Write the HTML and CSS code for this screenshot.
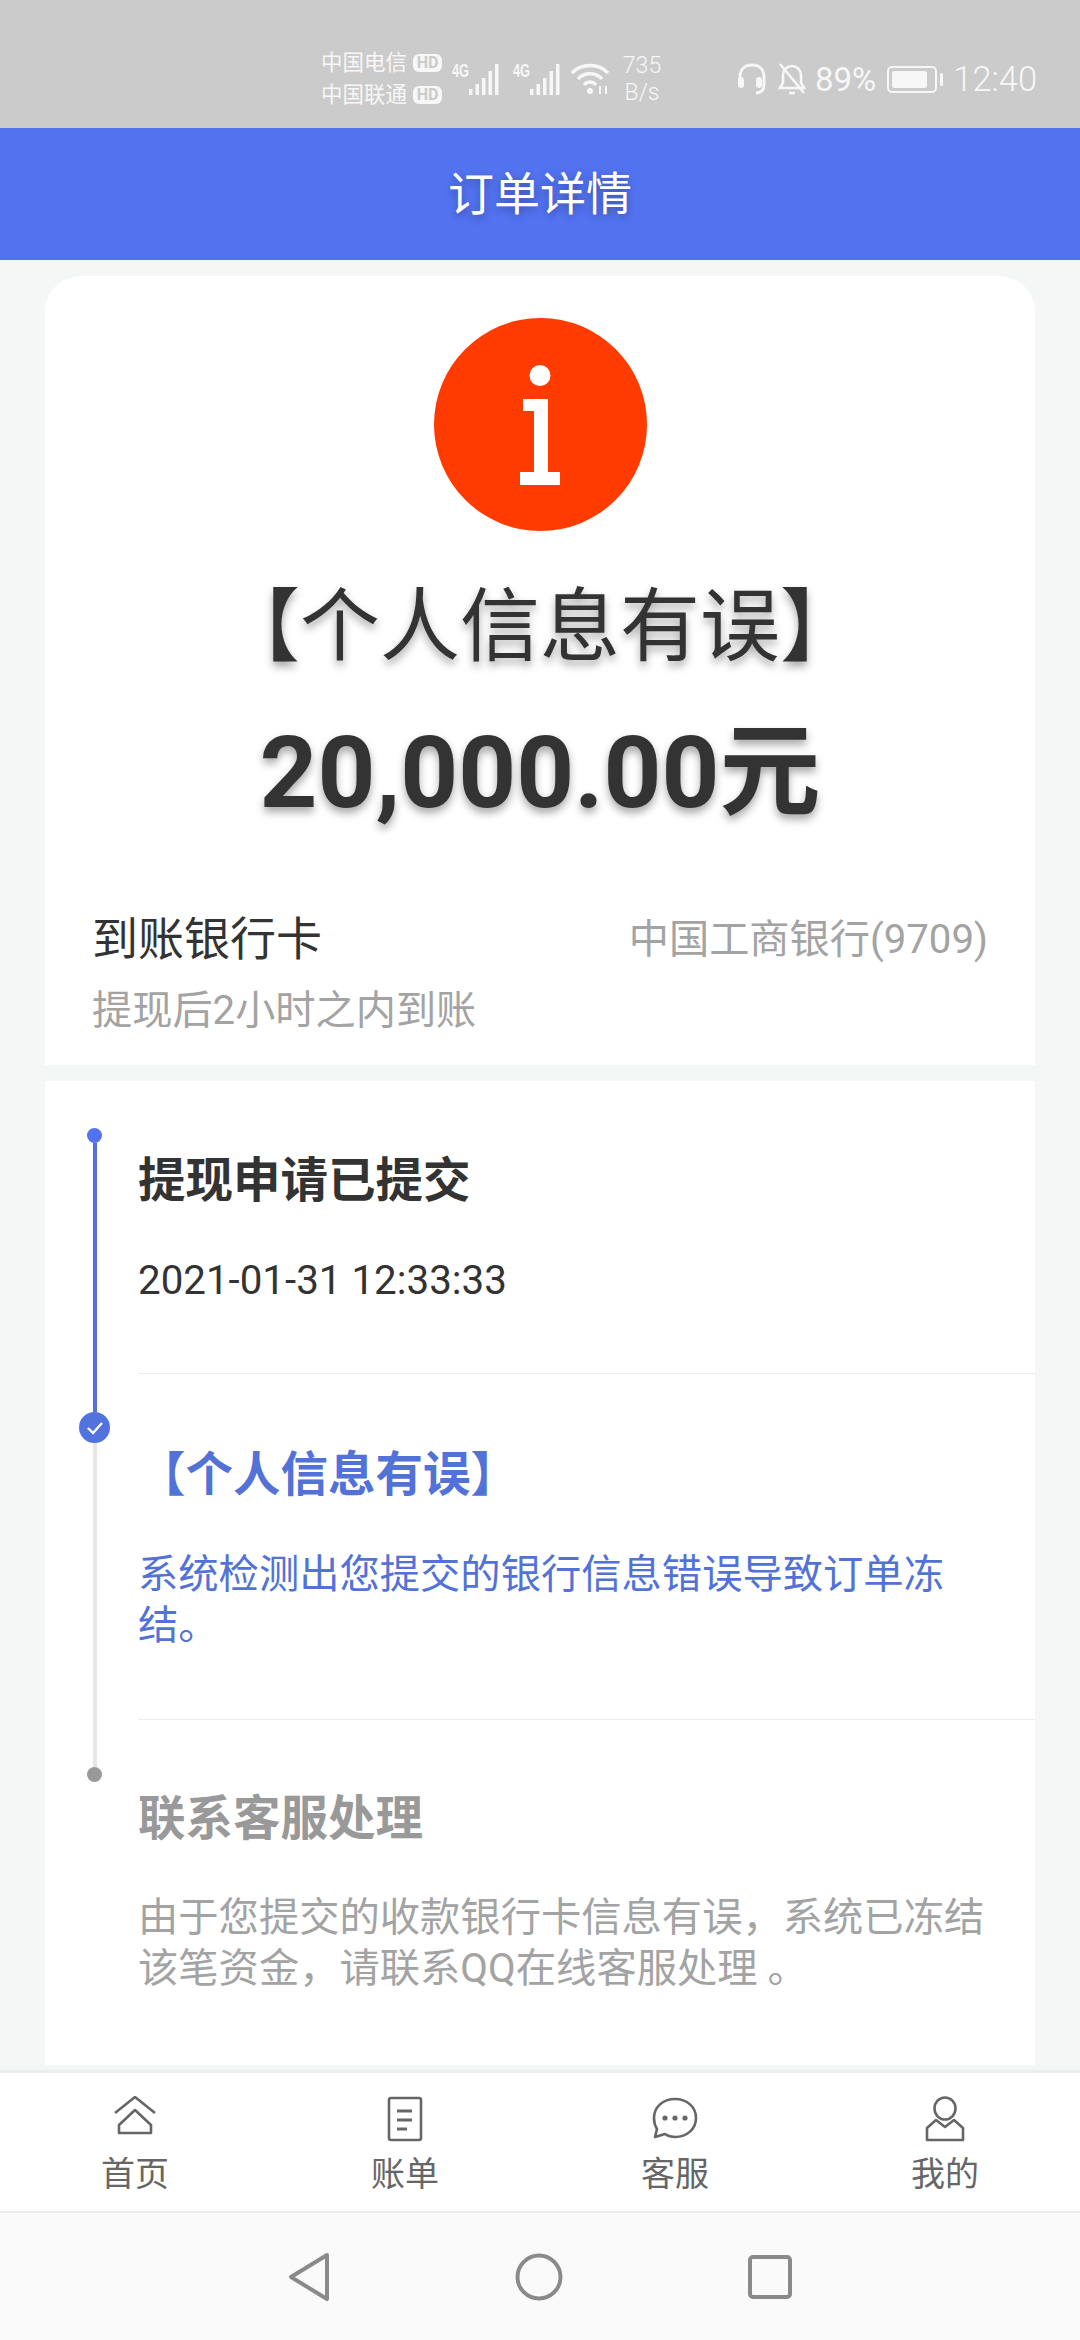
FILE: index.html
```html
<!DOCTYPE html>
<html lang="zh-CN">
<head>
    <meta charset="UTF-8">
    <meta name="viewport" content="width=device-width, initial-scale=1.0">
    <title>订单详情</title>
    <link rel="stylesheet" href="styles.css">
</head>
<body>
    <div class="status-bar">
        <div class="carriers">
            <div class="carrier">中国电信<span class="hd">HD</span></div>
            <div class="carrier">中国联通<span class="hd">HD</span></div>
        </div>
        <svg class="signal" width="50" height="36" viewBox="0 -4 50 36" fill="#f7f7f7">
            <text x="0" y="14" class="net" textLength="17" lengthAdjust="spacingAndGlyphs">4G</text>
            <rect x="17" y="26" width="3.500" height="6"/><rect x="23.500" y="21" width="3.500" height="11"/><rect x="30" y="15" width="3.500" height="17"/><rect x="36.500" y="8" width="3.500" height="24"/><rect x="43" y="1" width="3.500" height="31"/>
        </svg>
        <svg class="signal second" width="50" height="36" viewBox="0 -4 50 36" fill="#f7f7f7">
            <text x="0" y="14" class="net" textLength="17" lengthAdjust="spacingAndGlyphs">4G</text>
            <rect x="17" y="26" width="3.500" height="6"/><rect x="23.500" y="21" width="3.500" height="11"/><rect x="30" y="15" width="3.500" height="17"/><rect x="36.500" y="8" width="3.500" height="24"/><rect x="43" y="1" width="3.500" height="31"/>
        </svg>
        <svg class="wifi" width="40" height="32" viewBox="0 0 40 32" fill="none" stroke="#f7f7f7" stroke-width="3.400">
            <path d="M1 10C10 0 28 0 37 10"/>
            <path d="M7 16C13 9 25 9 31 16"/>
            <path d="M13 22C16 18 22 18 25 22"/>
            <circle cx="19" cy="28" r="3" fill="#f7f7f7" stroke="none"/>
            <path d="M29 23v8M35 23v8" stroke-width="2"/>
        </svg>
        <div class="speed"><span>735</span><span>B/s</span></div>
        <svg class="headset" width="30" height="32" viewBox="0 0 30 32" fill="none" stroke="#f7f7f7" stroke-width="3">
            <path d="M3 22V14C3 6 8 2 15 2s12 4 12 12v8c0 5-3 8-8 8"/>
            <rect x="1" y="14" width="6" height="11" rx="3" fill="#f7f7f7" stroke="none"/>
            <rect x="19" y="14" width="6" height="11" rx="3" fill="#f7f7f7" stroke="none"/>
        </svg>
        <svg class="bell" width="30" height="32" viewBox="0 0 30 32" fill="none" stroke="#f7f7f7" stroke-width="2.600">
            <path d="M3 25h24l-3-5v-8c0-5-4-9-9-9s-9 4-9 9v8z"/>
            <path d="M3 1l24 29"/>
            <path d="M12 30h6"/>
        </svg>
        <span class="pct">89%</span>
        <div class="battery"><div class="battery-fill"></div></div>
        <div class="battery-tip"></div>
        <span class="clock">12:40</span>
    </div>

    <div class="title-bar">订单详情</div>

    <main class="content">
        <section class="card summary">
            <div class="alert-icon">
                <svg width="40" height="120" viewBox="0 0 40 120" fill="#fff">
                    <ellipse cx="20" cy="10.500" rx="10.500" ry="10.500"/>
                    <path d="M3 34H28V107H40V120H0V107H14V46H3z"/>
                </svg>
            </div>
            <h1 class="status-name">【个人信息有误】</h1>
            <div class="amount">20,000.00元</div>
            <div class="bank-row">
                <span class="bank-label">到账银行卡</span>
                <span class="bank-name">中国工商银行(9709)</span>
            </div>
            <div class="bank-note">提现后2小时之内到账</div>
        </section>

        <section class="card timeline">
            <div class="step step-one">
                <div class="rail">
                    <div class="dot dot-blue"></div>
                    <div class="line line-blue"></div>
                </div>
                <div class="step-body">
                    <h3 class="step-title">提现申请已提交</h3>
                    <p class="step-date">2021-01-31 12:33:33</p>
                </div>
            </div>
            <div class="step step-two">
                <div class="rail">
                    <div class="dot-check">
                        <svg width="18" height="14" viewBox="0 0 18 14" fill="none" stroke="#fff" stroke-width="2.400"><path d="M2 7l5 5 9-10"/></svg>
                    </div>
                    <div class="line line-grey"></div>
                </div>
                <div class="step-body">
                    <h3 class="step-title blue">【个人信息有误】</h3>
                    <p class="step-text blue">系统检测出您提交的银行信息错误导致订单冻结。</p>
                </div>
            </div>
            <div class="step step-three">
                <div class="rail">
                    <div class="dot dot-grey"></div>
                </div>
                <div class="step-body last">
                    <h3 class="step-title grey">联系客服处理</h3>
                    <p class="step-text grey">由于您提交的收款银行卡信息有误，系统已冻结该笔资金，请联系QQ在线客服处理 。</p>
                </div>
            </div>
        </section>
    </main>

    <nav class="tabs">
        <div class="tab">
            <svg width="42" height="46" viewBox="0 0 42 46" fill="none" stroke="#666" stroke-width="2.600" stroke-linejoin="round">
                <path d="M1 17L21 1l20 16"/>
                <path d="M5 29L21 14l16 15v8H5z"/>
            </svg>
            <span>首页</span>
        </div>
        <div class="tab">
            <svg width="36" height="46" viewBox="0 0 36 46" fill="none" stroke="#666" stroke-width="2.600">
                <rect x="2" y="2" width="32" height="42" rx="2"/>
                <path d="M10 15h15M10 24h15M10 33h10" stroke-width="3"/>
            </svg>
            <span>账单</span>
        </div>
        <div class="tab">
            <svg width="46" height="46" viewBox="0 0 46 46" fill="none" stroke="#666" stroke-width="2.600" stroke-linejoin="round">
                <path d="M23 3C11 3 2 11 2 22c0 5 1 8 3 11l-2 8 10-3c3 2 6 3 10 3 12 0 21-8 21-19S35 3 23 3z"/>
                <g fill="#666" stroke="none"><circle cx="13" cy="22" r="2.600"/><circle cx="23" cy="22" r="2.600"/><circle cx="33" cy="22" r="2.600"/></g>
            </svg>
            <span>客服</span>
        </div>
        <div class="tab">
            <svg width="40" height="46" viewBox="0 0 40 46" fill="none" stroke="#666" stroke-width="2.600" stroke-linejoin="round">
                <ellipse cx="20" cy="12.500" rx="10.500" ry="11"/>
                <path d="M2 44V32l9-8 9 7 9-7 9 8v12z"/>
            </svg>
            <span>我的</span>
        </div>
    </nav>

    <div class="system-nav">
        <svg width="42" height="48" viewBox="0 0 42 48" fill="none" stroke="#8a8a8a" stroke-width="4" stroke-linejoin="round"><path d="M39 2L3 24l36 22z"/></svg>
        <svg width="48" height="48" viewBox="0 0 48 48" fill="none" stroke="#8a8a8a" stroke-width="4"><circle cx="24" cy="24" r="21.500"/></svg>
        <svg width="44" height="44" viewBox="0 0 44 44" fill="none" stroke="#8a8a8a" stroke-width="4"><rect x="2" y="2" width="40" height="40" rx="3"/></svg>
    </div>
</body>
</html>
```

FILE: styles.css
```css
* {
    box-sizing: border-box;
}
html, body {
    margin: 0;
    padding: 0;
}
body {
    width: 1080px;
    height: 2340px;
    display: flex;
    flex-direction: column;
    overflow: hidden;
    background-color: #f5f7f7;
    color: #333;
    font-family: Roboto, "Noto Sans CJK SC", sans-serif;
}
h1, h3, p {
    margin: 0;
    font-weight: normal;
}

/* status bar */
.status-bar {
    height: 128px;
    flex: none;
    display: flex;
    align-items: center;
    padding: 30px 0 0 321px;
    background-color: #cbcbcb;
    color: #f7f7f7;
}
.carriers {
    width: 131px;
    flex: none;
}
.carrier {
    display: flex;
    align-items: center;
    height: 32px;
    font-size: 21.500px;
    line-height: 32px;
}
.hd {
    margin-left: 6px;
    width: 29px;
    text-align: center;
    border-radius: 6px;
    background-color: #f7f7f7;
    color: #cbcbcb;
    font-size: 16px;
    line-height: 18px;
    font-weight: bold;
}
.signal {
    margin-top: -4px;
    margin-right: 11px;
}
.signal.second {
    margin-right: 8px;
}
.net {
    font-size: 18px;
    font-weight: bold;
    font-family: "Liberation Sans", sans-serif;
}
.speed {
    width: 42px;
    margin-left: 10px;
    display: flex;
    flex-direction: column;
    align-items: center;
    font-size: 23px;
    line-height: 27px;
    font-weight: 300;
}
.headset {
    margin-left: 74px;
}
.bell {
    margin-left: 10px;
}
.pct {
    margin-left: 8px;
    font-size: 33px;
}
.battery {
    margin-left: 11px;
    width: 50px;
    height: 27px;
    padding: 3px;
    border: 2px solid #f7f7f7;
    border-radius: 5px;
}
.battery-fill {
    width: 88%;
    height: 100%;
    border-radius: 2px;
    background-color: #f7f7f7;
}
.battery-tip {
    margin-left: 3px;
    width: 3px;
    height: 13px;
    border-radius: 2px;
    background-color: #f7f7f7;
}
.clock {
    margin-left: 10px;
    font-size: 34.500px;
    font-weight: 300;
}

/* blue title */
.title-bar {
    height: 132px;
    flex: none;
    display: flex;
    align-items: center;
    justify-content: center;
    padding-bottom: 8px;
    background-color: #5272f0;
    color: #fff;
    font-size: 46px;
    text-shadow: 0 3px 8px rgba(0, 0, 0, 0.3);
}

.content {
    flex: 1;
    min-height: 0;
    overflow: hidden;
    padding: 16px 45px 5px;
    display: flex;
    flex-direction: column;
    gap: 16px;
}
.card {
    background-color: #fff;
}

/* summary card */
.summary {
    height: 789px;
    flex: none;
    padding: 42px 47px 0 47px;
    border-radius: 36px 36px 0 0;
    display: flex;
    flex-direction: column;
    align-items: center;
}
.alert-icon {
    width: 213px;
    height: 213px;
    flex: none;
    border-radius: 50%;
    background-color: #ff3b00;
    display: flex;
    align-items: center;
    justify-content: center;
}
.status-name {
    margin-top: 46px;
    font-size: 80px;
    line-height: 100px;
    text-shadow: 0 5px 9px rgba(0, 0, 0, 0.35);
}
.amount {
    margin-top: 36px;
    font-size: 101px;
    line-height: 120px;
    font-weight: bold;
    text-shadow: 0 5px 9px rgba(0, 0, 0, 0.35);
}
.bank-row {
    width: 100%;
    margin-top: 73px;
    display: flex;
    align-items: center;
    justify-content: space-between;
}
.bank-label {
    font-size: 46px;
    line-height: 60px;
}
.bank-name {
    margin-bottom: 6px;
    font-size: 40.200px;
    color: #a3a3a3;
}
.bank-note {
    width: 100%;
    margin-top: 14px;
    font-size: 40.200px;
    line-height: 52px;
    color: #a3a3a3;
}

/* timeline */
.timeline {
    flex: 1;
    padding: 47px 0 0 33px;
}
.step {
    display: flex;
}
.rail {
    width: 60px;
    flex: none;
    display: flex;
    flex-direction: column;
    align-items: flex-start;
}
.step-one {
    height: 284px;
}
.step-two {
    height: 355px;
}
.step-one .step-body {
    height: 246px;
}
.step-two .step-body {
    height: 308px;
}
.dot {
    width: 15px;
    height: 15px;
    margin-left: 9px;
    border-radius: 50%;
    flex: none;
}
.dot-blue {
    background-color: #5272f0;
}
.dot-grey {
    background-color: #999;
}
.line {
    width: 4px;
    flex: 1;
    margin-left: 15px;
}
.line-blue {
    background-color: #5272d8;
}
.line-grey {
    background-color: #e6e6e6;
}
.dot-check {
    width: 31px;
    height: 31px;
    flex: none;
    margin-left: 1px;
    border-radius: 50%;
    background-color: #5272e0;
    display: flex;
    align-items: center;
    justify-content: center;
}
.step-body {
    flex: 1;
    border-bottom: 1px solid #ececec;
}
.step-body.last {
    border-bottom: none;
}
.step-title {
    font-size: 47.500px;
    line-height: 60px;
    font-weight: bold;
    color: #333;
}
.step-date {
    margin-top: 45px;
    font-size: 40.300px;
    line-height: 50px;
    color: #333;
}
.step-one .step-title {
    margin-top: 23px;
}
.step-two .step-title {
    margin-top: 33px;
}
.step-three .step-title {
    margin-top: 22px;
}
.step-text {
    padding-right: 46px;
    font-size: 40.300px;
    line-height: 51px;
}
.step-two .step-text {
    margin-top: 44px;
}
.step-three .step-text {
    margin-top: 43px;
}
.blue {
    color: #5272d8;
}
.grey {
    color: #a3a3a3;
}
.step-title.grey {
    color: #999;
}
.step-title.blue {
    color: #5272d8;
}

/* bottom tabs */
.tabs {
    height: 143px;
    flex: none;
    display: grid;
    grid-template-columns: repeat(4, 1fr);
    border-top: 3px solid #eeeeee;
    border-bottom: 2px solid #eeeeee;
    background-color: #fff;
}
.tab {
    display: flex;
    flex-direction: column;
    align-items: center;
    justify-content: flex-end;
    padding-bottom: 16px;
    gap: 11px;
    color: #666;
    font-size: 34px;
    line-height: 42px;
}

/* android nav */
.system-nav {
    height: 127px;
    flex: none;
    display: flex;
    align-items: center;
    justify-content: center;
    gap: 185px;
    background-color: #fafafa;
}
```
